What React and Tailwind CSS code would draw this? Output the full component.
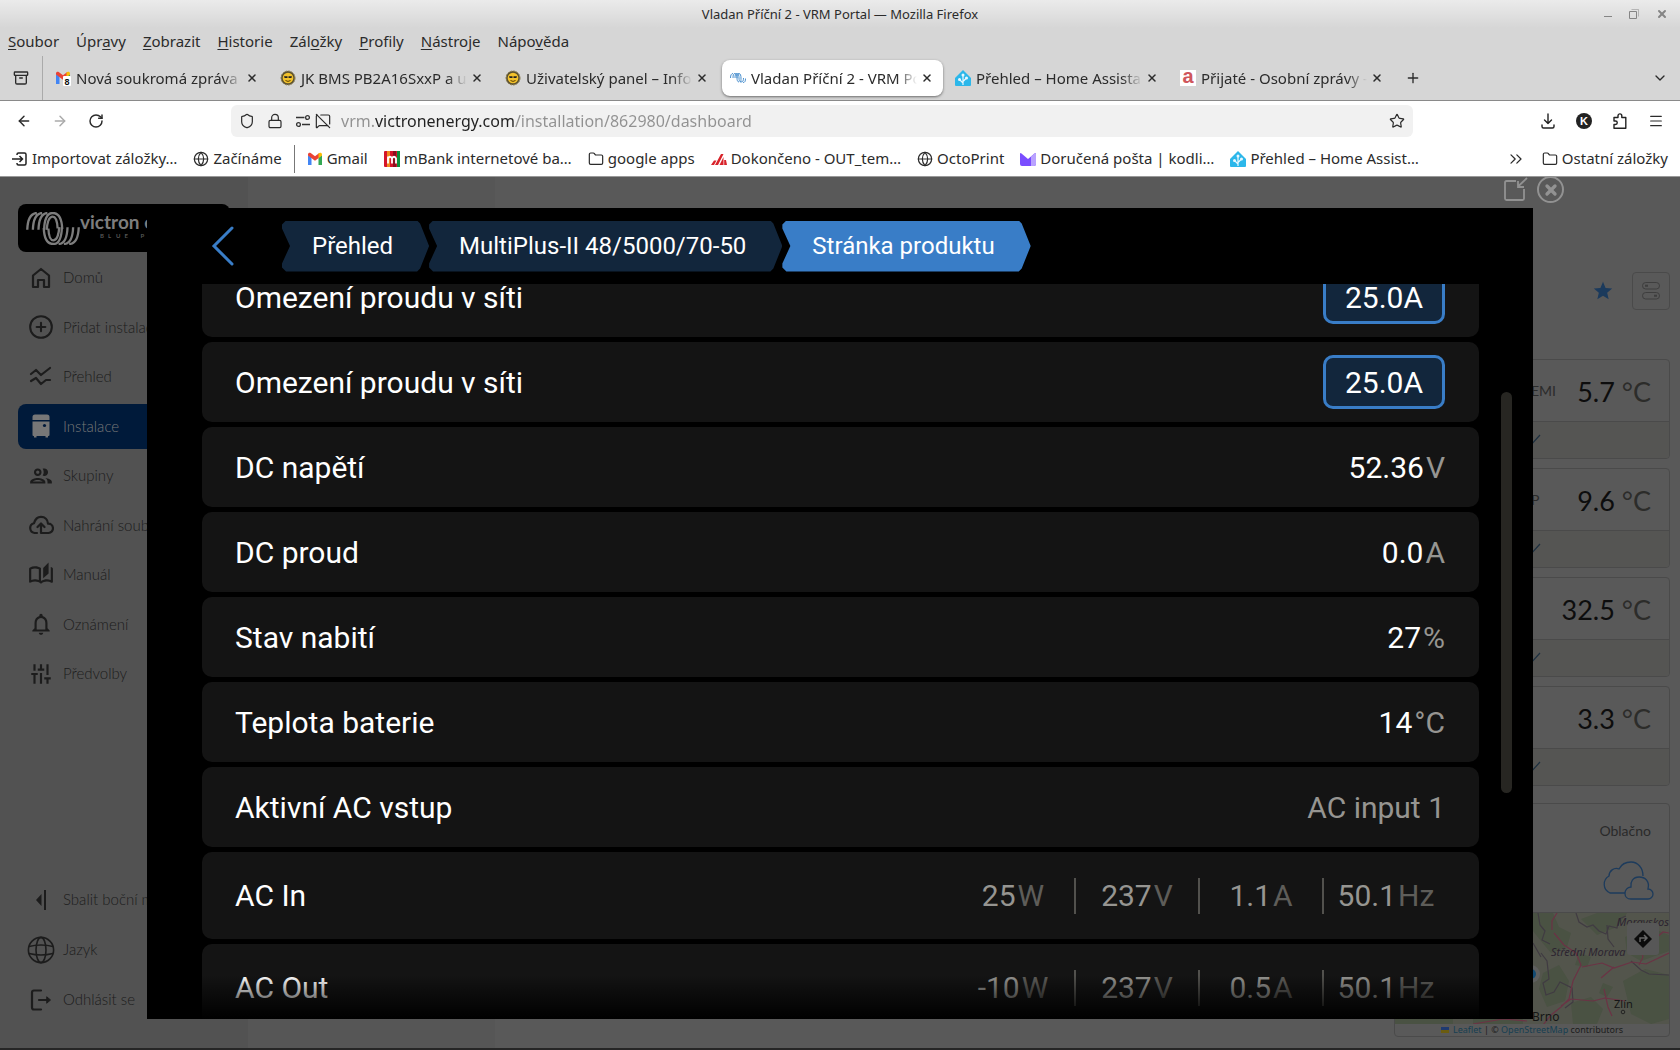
import React from "react";
import {
  Archive,
  ArrowLeft,
  ArrowRight,
  ChevronDown,
  ChevronsRight,
  CirclePlus,
  Folder,
  Globe,
  Lock,
  Menu,
  MessageSquareOff,
  Plus,
  RotateCw,
  Shield,
  Star,
  X,
} from "lucide-react";
import { MdOutlineGroup, MdOutlineAutoStories, MdNotificationsNone, MdStar, MdTune } from "react-icons/md";

/* ---------- favicons ---------- */

const GmailIcon = ({ badge }) => (
  <svg viewBox="0 0 16 16" className="size-4 shrink-0">
    <path d="M1 14V4l3.5 2.6V14z" fill="#4285f4" />
    <path d="M15 14V4l-3.500 2.600V14z" fill="#34a853" />
    <path d="M1 4.500V3.200C1 1.800 2.600 1.200 3.700 2L8 5.300 12.300 2v4.600L8 9.800z" fill="#ea4335" />
    <path d="M11.500 7.200V2.600C12.800 1.200 15 1.800 15 3.500v1z" fill="#fbbc04" />
    {badge && (
      <g>
        <rect x="8" y="6" width="8" height="10" rx="1" fill="#fff" />
        <text x="9.500" y="15" fontSize="9" fontWeight="700" fontFamily="Liberation Sans, sans-serif" fill="#111">
          {badge}
        </text>
      </g>
    )}
  </svg>
);

const SunIcon = () => (
  <svg viewBox="0 0 16 16" className="size-4 shrink-0">
    <circle cx="8" cy="8" r="7" fill="#5b5130" stroke="#8a7d52" strokeDasharray="2 1" />
    <circle cx="8" cy="8" r="5.300" fill="#f3c22b" />
    <path d="M4 6.300h3.500v1.800H4.600zM8.500 6.300H12l-.600 1.800H8.500z" fill="#222" />
    <path d="M5.500 10.500q2.500 1.800 5 0" stroke="#5a3c00" fill="none" />
  </svg>
);

const WaveIcon = () => (
  <svg viewBox="0 0 16 16" className="size-4 shrink-0" fill="none" stroke="#4a90cf" strokeWidth="1">
    <path d="M.5 8C.5 5 1.500 3.500 3 3.500M3 8c0-3 .500-4.500 2-4.500S7 6 7 8s.500 4 2 4M5 8c0-3 .500-4.500 2-4.500S9 6 9 8s.500 4 2 4M7 8c0-3 .500-4.500 2-4.500S11 6 11 8s0 4-1 4M11 12c2 0 2.500-1.500 2.500-4M13 12.500c2 0 2.500-1.500 2.500-4" />
  </svg>
);

const HomeAssistantIcon = () => (
  <svg viewBox="0 0 16 16" className="size-4 shrink-0">
    <path d="M8 0 0 8v7q0 1 1 1h14q1 0 1-1V8z" fill="#2cb7ea" />
    <path d="M8 15V5M8 13 4.500 9.500M8 11.500l3.500-3.500" stroke="#e9f8ff" strokeWidth="1.200" />
    <circle cx="8" cy="5" r="1.500" fill="#e9f8ff" />
    <circle cx="4.500" cy="9.500" r="1.500" fill="#e9f8ff" />
    <circle cx="11.500" cy="8" r="1.500" fill="#e9f8ff" />
  </svg>
);

const SeznamIcon = () => (
  <span className="flex size-4 shrink-0 items-center justify-center bg-white font-['Liberation_Sans',sans-serif] text-xl leading-none font-bold text-[#cf565c]">
    <span className="pb-1">a</span>
  </span>
);

const MBankIcon = () => (
  <svg viewBox="0 0 16 16" className="size-4 shrink-0">
    <rect width="16" height="16" rx="1" fill="#d4142a" />
    <rect x="3" width="3" height="16" fill="#f08a1d" />
    <rect x="9" width="3" height="16" fill="#8c0f1f" />
    <rect x="13" width="3" height="16" fill="#0a8f3c" />
    <path d="M4 12.500V5.500M4 7.500Q6 4 8 7.500v5M8 7.500Q10 4 12 7.500v5" stroke="#fff" strokeWidth="1.800" fill="none" />
  </svg>
);

const StripesIcon = () => (
  <svg viewBox="0 0 16 16" className="size-4 shrink-0" fill="#d8232a">
    <path d="M0 14 3 9.500h2.500L3 14zM4 14 10 3h2.500L7 14zM8.500 14 12.500 6v8z" />
    <path d="M13.200 9h1.800l1 5h-2.800z" />
  </svg>
);

const MailIcon = () => (
  <svg viewBox="0 0 16 16" className="size-4 shrink-0">
    <path d="M0 3q0-1.500 1.500-.5L8 8l6.500-5.500Q16 1.500 16 3v10q0 2-2 2H2q-2 0-2-2z" fill="#7a4dff" />
    <path d="M11 5.500l3.500-3Q16 1.500 16 3v10q0 2-2 2h-3z" fill="#b9a2ff" />
  </svg>
);

const ImportIcon = () => (
  <svg viewBox="0 0 16 16" className="size-4 shrink-0" fill="none" stroke="#222" strokeWidth="1.500">
    <path d="M5 4V3.500Q5 2 6.500 2h6Q14 2 14 3.500v9q0 1.500-1.500 1.500h-6Q5 14 5 12.500V12M0 8h10M7.500 5 10.500 8l-3 3" />
  </svg>
);

const FolderIcon = () => <Folder className="size-4 shrink-0" strokeWidth={1.8} />;

const GlobeSmall = () => <Globe className="size-4 shrink-0" strokeWidth={1.8} />;

const PermissionsIcon = () => (
  <svg viewBox="0 0 16 16" className="size-4" fill="none" stroke="#333" strokeWidth="1.300">
    <path d="M1 4.500h8.500M7 11.500h8" />
    <circle cx="12.500" cy="4.500" r="1.900" />
    <circle cx="3.500" cy="11.500" r="1.900" />
  </svg>
);

const PuzzleIcon = () => (
  <svg viewBox="0 0 16 16" className="size-4" fill="none" stroke="#222" strokeWidth="1.400" strokeLinejoin="round">
    <path d="M2 15.200V11.500h1.500a1.700 1.700 0 0 0 0-3.500H2V4.500h4V2.800a1.900 1.900 0 0 1 3.800 0v1.700h4v10.700z" />
  </svg>
);

const DownloadIcon = () => (
  <svg viewBox="0 0 16 16" className="size-4" fill="none" stroke="#222" strokeWidth="1.400" strokeLinecap="round" strokeLinejoin="round">
    <path d="M8 1v9.500M4.500 7 8 10.500 11.500 7M2 12v1.500q0 1.500 1.500 1.500h9q1.500 0 1.500-1.500V12" />
  </svg>
);

/* ---------- browser ---------- */

const menus = [
  ["", "S", "oubor"],
  ["Úpr", "a", "vy"],
  ["", "Z", "obrazit"],
  ["", "H", "istorie"],
  ["Zál", "o", "žky"],
  ["", "P", "rofily"],
  ["", "N", "ástroje"],
  ["Nápo", "v", "ěda"],
];

const tabs = [
  { title: "Nová soukromá zpráva -", icon: <GmailIcon badge="8" /> },
  { title: "JK BMS PB2A16SxxP a u", icon: <SunIcon /> },
  { title: "Uživatelský panel – Info", icon: <SunIcon /> },
  { title: "Vladan Příční 2 - VRM Po", icon: <WaveIcon />, active: true },
  { title: "Přehled – Home Assista", icon: <HomeAssistantIcon /> },
  { title: "Přijaté - Osobní zprávy -", icon: <SeznamIcon /> },
];

const bookmarks = [
  { label: "Gmail", icon: <GmailIcon /> },
  { label: "mBank internetové ba…", icon: <MBankIcon /> },
  { label: "google apps", icon: <FolderIcon /> },
  { label: "Dokončeno - OUT_tem…", icon: <StripesIcon /> },
  { label: "OctoPrint", icon: <GlobeSmall /> },
  { label: "Doručená pošta | kodli…", icon: <MailIcon /> },
  { label: "Přehled – Home Assist…", icon: <HomeAssistantIcon /> },
];

const Bookmark = ({ label, icon }) => (
  <a href="#" className="flex shrink-0 items-center gap-1 whitespace-nowrap">
    {icon}
    {label}
  </a>
);

const BrowserChrome = () => (
  <header className="shrink-0 font-['Noto_Sans',sans-serif] text-[15px] text-[#2b2b2b]">
    <div className="bg-[#d6d6d6]">
      <div className="grid h-7 grid-cols-[1fr_auto_1fr] items-center bg-linear-to-b from-[#ebebeb] to-[#d6d6d6] px-3">
        <span />
        <h1 className="pt-0.5 text-[13px]">Vladan Příční 2 - VRM Portal — Mozilla Firefox</h1>
        <div className="flex items-center justify-end gap-4 text-[#858585]">
          <button aria-label="Minimalizovat" className="mt-1 h-px w-2 bg-[#858585]" />
          <button aria-label="Obnovit" className="size-3">
            <svg viewBox="0 0 12 12" fill="none" stroke="currentColor">
              <path d="M1.500 3.500h7v7h-7z" />
              <path d="M3.500 1.500h7v7" opacity=".5" />
            </svg>
          </button>
          <button aria-label="Zavřít">
            <X className="size-3" strokeWidth={4} />
          </button>
        </div>
      </div>
      <nav className="flex h-7 items-center gap-[17px] px-2 pb-0.5">
        {menus.map(([before, key, after]) => (
          <button key={before + key + after}>
            {before}
            <span className="underline underline-offset-2">{key}</span>
            {after}
          </button>
        ))}
      </nav>
      <div className="flex h-[45px] items-center border-b border-[#8a8a8a]">
        <button aria-label="Karty" className="mr-0.5 flex h-full w-[43px] items-center justify-center border-r border-[#aaa]">
          <Archive className="size-4" strokeWidth={2} />
        </button>
        {tabs.map((tab) => (
          <div
            key={tab.title}
            className={`mx-[2px] flex h-9 w-[221px] items-center gap-1 rounded-lg pr-[10px] pl-2 ${tab.active ? "bg-white shadow-sm shadow-black/40" : ""}`}
          >
            {tab.icon}
            <button className="min-w-0 flex-1 overflow-hidden pl-px text-left whitespace-nowrap [mask-image:linear-gradient(to_right,black_88%,transparent)]">
              {tab.title}
            </button>
            <button aria-label="Zavřít panel">
              <X className="size-3" strokeWidth={3} />
            </button>
          </div>
        ))}
        <button aria-label="Nový panel" className="ml-[10px]">
          <Plus className="size-4" strokeWidth={2} />
        </button>
        <button aria-label="Seznam panelů" className="mr-3 ml-auto">
          <ChevronDown className="size-4" strokeWidth={2} />
        </button>
      </div>
    </div>
    <div className="bg-white">
      <div className="flex h-10 items-center">
        <div className="flex w-[231px] items-center gap-5 pl-4">
          <button aria-label="Zpět">
            <ArrowLeft className="size-4" strokeWidth={2.2} />
          </button>
          <button aria-label="Vpřed" className="text-[#aaa]">
            <ArrowRight className="size-4" strokeWidth={2.2} />
          </button>
          <button aria-label="Obnovit stránku">
            <RotateCw className="size-4" strokeWidth={2.2} />
          </button>
        </div>
        <div className="flex h-8 flex-1 items-center rounded-md bg-[#f1f1f1] px-2">
          <Shield className="mr-3 size-4" strokeWidth={1.8} />
          <Lock className="mr-3 size-4" strokeWidth={1.8} />
          <PermissionsIcon />
          <MessageSquareOff className="mr-[10px] ml-1 size-4" strokeWidth={1.8} />
          <input
            aria-label="Adresa"
            defaultValue="vrm.victronenergy.com/installation/862980/dashboard"
            className="min-w-0 flex-1 bg-[linear-gradient(to_right,#919191_34px,#202020_34px,#202020_174px,#919191_174px)] bg-clip-text text-base text-transparent outline-none"
          />
          <button aria-label="Přidat záložku">
            <Star className="size-4" strokeWidth={1.8} />
          </button>
        </div>
        <div className="flex w-[267px] items-center justify-end gap-5 pr-4">
          <button aria-label="Stahování">
            <DownloadIcon />
          </button>
          <button className="size-4 rounded-full bg-[#222] font-['Liberation_Sans',sans-serif] text-[11px] leading-4 font-bold text-white">
            K
          </button>
          <button aria-label="Rozšíření">
            <PuzzleIcon />
          </button>
          <button aria-label="Nabídka">
            <Menu className="size-4" strokeWidth={1.8} />
          </button>
        </div>
      </div>
      <div className="flex h-9 items-center gap-4 border-b border-[#999] px-3">
        <Bookmark label="Importovat záložky…" icon={<ImportIcon />} />
        <Bookmark label="Začínáme" icon={<GlobeSmall />} />
        <span className="-mx-1 h-7 w-px bg-[#777]" />
        {bookmarks.map((b) => (
          <Bookmark key={b.label} {...b} />
        ))}
        <button aria-label="Další záložky" className="ml-auto">
          <ChevronsRight className="size-5" strokeWidth={1.5} />
        </button>
        <Bookmark label="Ostatní záložky" icon={<FolderIcon />} />
      </div>
    </div>
  </header>
);

/* ---------- sidebar ---------- */

const VictronMark = () => (
  <svg viewBox="0 0 162 100" className="h-[33px] w-[54px] shrink-0" fill="none" stroke="currentColor" strokeWidth="7">
    <g id="arcs">
      <path d="M3 54C4 22 12 4 32 3M20 54C21 22 30 4 48 3M37 54C38 22 46 4 64 3M54 54C55 22 63 3 80 3 98 3 108 22 109 52M62 54C64 28 70 14 80 14 90 14 94 28 95 50" />
    </g>
    <use href="#arcs" transform="rotate(180 81 50)" />
  </svg>
);

const HomeIcon = () => (
  <svg viewBox="0 0 20 22" className="h-[22px] w-5" fill="none" stroke="currentColor" strokeWidth="2.200" strokeLinejoin="round">
    <path d="M2 20V8.500L10 2l8 6.500V20h-5v-7H7v7z" />
  </svg>
);

const TrendIcon = () => (
  <svg viewBox="0 0 24 22" className="h-[22px] w-6" fill="none" stroke="currentColor" strokeWidth="2.200" strokeLinecap="round" strokeLinejoin="round">
    <path d="M2 8l5-4 5 5L21 2M2 15l5-3 5 6 5-4h4" />
  </svg>
);

const CabinetIcon = () => (
  <svg viewBox="0 0 18 24" className="h-6 w-[18px]">
    <path d="M.5 6V3Q.5.500 3 .5h12q2.500 0 2.500 2.500v3zM.500 7.500h17V21q0 1-1 1H16v1.500h-2.500V22h-9v1.500H2V22h-.500q-1 0-1-1z" fill="currentColor" />
    <circle cx="12.500" cy="11.500" r="1.600" fill="#001a3a" />
  </svg>
);

const CloudUploadIcon = () => (
  <svg viewBox="0 0 26 20" className="h-5 w-[26px]" fill="none" stroke="currentColor" strokeWidth="2.200" strokeLinecap="round" strokeLinejoin="round">
    <path d="M9 18H6.500A5 5 0 0 1 6 8.200C7 4.500 9.500 1.800 13 1.800c4 0 6.800 3 7 6.800a4.700 4.700 0 0 1 .5 9.400H13V9M9.500 12 13 8.500l3.500 3.500" />
  </svg>
);

const CollapseIcon = () => (
  <svg viewBox="0 0 12 22" className="h-[22px] w-3" fill="currentColor">
    <path d="M6.500 5v12L1 11zM9 1h2v20H9z" />
  </svg>
);

const GlobeIcon = () => (
  <svg viewBox="0 0 28 28" className="size-7" fill="none" stroke="currentColor" strokeWidth="1.600">
    <circle cx="14" cy="14" r="12.600" />
    <ellipse cx="14" cy="14" rx="5" ry="12.600" />
    <path d="M2 10.500Q14 7.500 26 10.500M2 17.500q12 3 24 0" />
  </svg>
);

const LogoutIcon = () => (
  <svg viewBox="0 0 22 22" className="size-[22px]" fill="none" stroke="currentColor" strokeWidth="2.200" strokeLinecap="round" strokeLinejoin="round">
    <path d="M11 1.500H4Q2 1.500 2 3.500v15q0 2 2 2h7M9 11h9" />
    <path d="M17 8l3.500 3-3.500 3z" fill="currentColor" strokeWidth="1" />
  </svg>
);

const navItems = [
  { label: "Domů", icon: <HomeIcon /> },
  { label: "Přidat instalaci", icon: <CirclePlus className="size-[26px]" strokeWidth={1.9} /> },
  { label: "Přehled", icon: <TrendIcon /> },
  { label: "Instalace", icon: <CabinetIcon />, active: true },
  { label: "Skupiny", icon: <MdOutlineGroup className="size-[26px]" /> },
  { label: "Nahrání souboru", icon: <CloudUploadIcon /> },
  { label: "Manuál", icon: <MdOutlineAutoStories className="size-[26px]" /> },
  { label: "Oznámení", icon: <MdNotificationsNone className="size-[26px]" /> },
  { label: "Předvolby", icon: <MdTune className="size-[26px] rotate-90" /> },
];

const bottomItems = [
  { label: "Sbalit boční menu", icon: <CollapseIcon /> },
  { label: "Jazyk", icon: <GlobeIcon /> },
  { label: "Odhlásit se", icon: <LogoutIcon /> },
];

const NavItem = ({ label, icon, active }) => (
  <a
    href="#"
    className={`flex h-[45px] items-center rounded-lg pl-2 text-[15px] whitespace-nowrap ${active ? "bg-[#001a3a] text-[#777]" : "text-[#1c1c1c]"}`}
  >
    <span className="mr-2 flex w-[29px] justify-center">{icon}</span>
    {label}
  </a>
);

const Sidebar = () => (
  <aside className="flex w-[248px] shrink-0 flex-col bg-[#525252] px-[18px] pt-[27px] font-['Lato',sans-serif] font-light">
    <div className="flex h-12 shrink-0 items-center rounded-lg bg-black pl-2 text-[#7d7d7d]">
      <VictronMark />
      <div className="flex flex-col pb-1 whitespace-nowrap">
        <span className="text-[19px] leading-5 font-bold">victron energy</span>
        <span className="flex gap-1 pl-5 text-[6px] leading-[8px] font-bold text-[#555]">
          {["B", "L", "U", "E", "", "P", "O", "W", "E", "R"].map((c, i) => (
            <span key={i} className="min-w-1">{c}</span>
          ))}
        </span>
      </div>
    </div>
    <nav className="mt-[3px] flex h-[441px] flex-col justify-between">
      {navItems.map((item) => (
        <NavItem key={item.label} {...item} />
      ))}
    </nav>
    <nav className="mt-auto mb-[26px] flex flex-col gap-[5px]">
      {bottomItems.map((item) => (
        <NavItem key={item.label} {...item} />
      ))}
    </nav>
  </aside>
);

/* ---------- dashboard widgets ---------- */

const sensors = [
  { label: "EMI", value: "5.7" },
  { label: "P", value: "9.6" },
  { label: "", value: "32.5" },
  { label: "", value: "3.3" },
];

const SensorCard = ({ label, value }) => (
  <section className="flex h-[100px] flex-col overflow-hidden rounded-sm border border-[#4a4a4a]">
    <div className="flex flex-1 items-center justify-between pt-1 pr-[18px] pl-[136px]">
      <span className="pb-1 text-sm text-[#2b2b2b]">{label}</span>
      <span className="text-[27px] text-[#2c2c2a]">
        <span className="text-[#0d0d0d]">{value}</span> °C
      </span>
    </div>
    <div className="flex h-[37px] items-center border-t border-[#4a4a4a] bg-[#555553] pl-[130px]">
      <svg viewBox="0 0 16 12" className="h-3 w-4" fill="none" stroke="#1d3040" strokeWidth="1.200">
        <path d="M1 6l5 5L15 1" />
      </svg>
    </div>
  </section>
);

const RegionMap = () => (
  <svg viewBox="0 0 276 111" preserveAspectRatio="xMaxYMin slice" className="block h-[111px] w-full" fill="none">
    <rect width="276" height="111" fill="#53554c" />
    <g fill="#4a5243">
      <path d="M140 0h20l6 14 12 6-4 14-16 6-10-12-8-10zM188 6l16-6h30l-10 14-20 8zM232 24l24-10 20 8v16l-28 10-14-8zM150 60l16-8 10 16-4 20-18 6-8-18zM230 68l22-12 24 6v44l-18 5-20-10zM178 90l20-6 12 12-6 15h-24z" />
      <path d="M186 40l12 4-4 10-12-2zM210 70l10 4-6 10-8-4zM0 98h60v13H0zM80 96h50v15H80z" />
    </g>
    <g stroke="#403b42" strokeWidth="1.200">
      <path d="M145 0l2 12 5 6-3 9 8 4M183 0l3 9 8 5 6-2 6 6 7 3 3-8 8 2 2-9 7-3M148 40l6 8 2 18-6 4 3 12 8-3 6-10 12 6 1 14-8 6M214 12l1 14 6 8M238 48l10 9 8 4 20 1M140 30l8 14" />
    </g>
    <g stroke="#6b3345" strokeWidth="1.200">
      <path d="M161 20l10 12 12 8 5 12-8 16-4 18-8 8-10 8-8 10h-30M189 54l20-4 12 5 18-6 14 2 23-11M221 54l-13 11M168 93l10-7 22 2 12-3 20 3M211 76l4 18 4 9M159 17V8l5-8M262 26l8-7 6 1M242 20l8 24-4 8M80 111l30-5 24 2" />
    </g>
    <g fontFamily="Noto Sans, sans-serif">
      <text x="224" y="13" fontSize="11" fontStyle="italic" fill="#2c2430">Moravskos</text>
      <text x="158" y="43" fontSize="11" fontStyle="italic" fill="#2c2430">Střední Morava</text>
      <text x="139" y="108" fontSize="12" fill="#151515">Brno</text>
      <text x="221" y="95" fontSize="11" fill="#151515">Zlín</text>
    </g>
    <circle cx="230" cy="99" r="1.800" stroke="#222" />
    <circle cx="138" cy="61" r="9" fill="#5f5f5f" />
    <circle cx="138" cy="61" r="5" fill="#134a72" />
    <rect x="234" y="10" width="32" height="32" rx="3" fill="#575757" />
    <path d="M250 17l9 9-9 9-9-9z" fill="#0b0b0b" />
    <path d="M247 29v-4h6M251 22l3 3-3 3" stroke="#666" strokeWidth="1.500" />
  </svg>
);

const WeatherCard = () => (
  <section className="mt-2 flex flex-1 flex-col overflow-hidden rounded-sm border border-[#4a4a4a]">
    <div className="flex flex-1 flex-col items-end border-b border-[#4a4a4a] pr-[14px]">
      <p className="mt-[17px] mr-1 text-sm text-[#2a2a2a]">Oblačno</p>
      <svg viewBox="0 0 56 40" className="mt-5 h-10 w-14" fill="none" stroke="#1d3b5c" strokeWidth="1.300">
        <path d="M26 32H11A9.500 9.500 0 0 1 10 15C10 10 15 6 20 8 23 2 28 1 32 1c7 0 12 6 12 14" />
        <path d="M32 38h17a5 5 0 0 0 0-10C51 20 46 16 40 16s-9 5-8 10c-8 1-8 12 0 12z" />
      </svg>
    </div>
    <RegionMap />
    <p className="flex h-3 items-center justify-center gap-1 font-['Noto_Sans',sans-serif] text-[9px] text-[#1c1c1c]">
      <span className="h-1.5 w-2 bg-linear-to-b from-[#1f3a70] from-50% to-[#6b5c10] to-50%" />
      <span>
        <a href="#" className="text-[#173f52]">Leaflet</a> | © <a href="#" className="text-[#173f52]">OpenStreetMap</a> contributors
      </span>
    </p>
  </section>
);

const Dashboard = () => (
  <main className="flex min-w-0 flex-1 font-['Lato',sans-serif]">
    <div className="w-[247px] shrink-0 bg-[#565656]" />
    <div className="flex flex-1 justify-end bg-[#595959] pr-[10px] pb-[11px]">
      <div className="flex w-[276px] flex-col gap-[9px] pt-[95px]">
        <div className="mb-10 flex h-[38px] shrink-0 items-center justify-end gap-[18px]">
          <button aria-label="Oblíbené">
            <MdStar className="size-[22px] text-[#1b3a5c]" />
          </button>
          <button aria-label="Přepínače" className="flex size-[38px] items-center justify-center rounded-sm border border-[#4a4a4a]">
            <svg viewBox="0 0 18 18" className="size-[18px]" fill="none" stroke="#3e3e3e">
              <rect x=".5" y=".5" width="17" height="6.500" rx="3.200" />
              <rect x=".5" y="10.500" width="17" height="6.500" rx="3.200" />
              <path d="M3 3.800h3M12 13.800h3" strokeWidth="2" />
            </svg>
          </button>
        </div>
        {sensors.map((s) => (
          <SensorCard key={s.value} {...s} />
        ))}
        <WeatherCard />
      </div>
    </div>
  </main>
);

/* ---------- remote console dialog ---------- */

const Crumb = ({ children, active }) => (
  <button
    className={`h-[51px] pr-9 pl-[30px] text-2xl whitespace-nowrap [clip-path:polygon(4px_0,calc(100%-12px)_0,calc(100%-9px)_3px,100%_50%,calc(100%-9px)_calc(100%-3px),calc(100%-12px)_100%,4px_100%,0_calc(100%-4px),0_calc(100%-8px),8px_50%,0_8px,0_4px)] ${active ? "bg-[#397dc7]" : "bg-[#12263c]"}`}
  >
    {children}
  </button>
);

const rows = [
  { label: "Omezení proudu v síti", limit: "25.0A" },
  { label: "Omezení proudu v síti", limit: "25.0A" },
  { label: "DC napětí", value: "52.36", unit: "V" },
  { label: "DC proud", value: "0.0", unit: "A" },
  { label: "Stav nabití", value: "27", unit: "%" },
  { label: "Teplota baterie", value: "14", unit: "°C" },
  { label: "Aktivní AC vstup", text: "AC input 1" },
];

const acRows = [
  { label: "AC In", values: [["25", "W"], ["237", "V"], ["1.1", "A"], ["50.1", "Hz"]] },
  { label: "AC Out", values: [["-10", "W"], ["237", "V"], ["0.5", "A"], ["50.1", "Hz"]] },
];

const Row = ({ label, limit, value, unit, text }) => (
  <li className="flex h-20 shrink-0 items-center justify-between rounded-[10px] bg-[#141414] pr-[34px] pl-[33px]">
    <span>{label}</span>
    {limit && (
      <button className="h-[54px] w-[122px] rounded-[10px] border-3 border-[#397dc7] bg-[#12263c]">{limit}</button>
    )}
    {value && (
      <span>
        {value}
        <span className="ml-0.5 text-[#969591]">{unit}</span>
      </span>
    )}
    {text && <span className="text-[#969591]">{text}</span>}
  </li>
);

const AcRow = ({ label, values }) => (
  <li className="flex h-[87px] shrink-0 items-center justify-between rounded-[10px] bg-[#141414] pr-[31px] pl-[33px]">
    <span>{label}</span>
    <div className="flex divide-x-2 divide-[#52514d]">
      {values.map(([value, unit]) => (
        <span key={unit} className="w-[124px] text-center leading-9 text-[#969591]">
          {value}
          <span className="ml-0.5 text-[#5e5d59]">{unit}</span>
        </span>
      ))}
    </div>
  </li>
);

const ConsoleDialog = () => (
  <div role="dialog" aria-label="Stránka produktu" className="absolute inset-x-[147px] top-[31px] bottom-[29px] flex flex-col bg-black font-['Roboto',sans-serif] text-white">
    <header className="flex h-[76px] shrink-0 items-center pl-[64px]">
      <button aria-label="Zpět" className="mr-[47px]">
        <svg viewBox="0 0 24 40" className="h-10 w-6" fill="none" stroke="#397dc7" strokeWidth="3" strokeLinecap="round">
          <path d="M21 2 3 20l18 18" />
        </svg>
      </button>
      <Crumb>Přehled</Crumb>
      <Crumb>MultiPlus-II 48/5000/70-50</Crumb>
      <Crumb active>Stránka produktu</Crumb>
    </header>
    <div className="flex min-h-0 flex-1">
      <div className="relative min-w-0 flex-1 overflow-hidden pl-[55px]">
        <ul className="-mt-[27px] flex flex-col gap-[5px] text-[30px]">
          {rows.map((row, i) => (
            <Row key={i} {...row} />
          ))}
          {acRows.map((row) => (
            <AcRow key={row.label} {...row} />
          ))}
        </ul>
        <div className="absolute inset-x-0 bottom-0 h-11 bg-linear-to-b from-transparent to-black" />
      </div>
      <div className="w-[54px] shrink-0 pt-[108px] pl-[22px]">
        <div className="h-[401px] w-[11px] rounded-full bg-[#272622]" />
      </div>
    </div>
    <div className="absolute right-[-31px] bottom-full flex items-center gap-[9px] pb-[5px] text-[#929292]">
      <button aria-label="Otevřít v okně">
        <svg viewBox="0 0 26 26" className="size-[26px]" fill="none" stroke="currentColor" strokeWidth="1.800">
          <path d="M14 4H4.500Q3 4 3 5.500v16Q3 23 4.500 23h16q1.500 0 1.500-1.500V12M25 1l-9 8.500M16 4v6h6" />
        </svg>
      </button>
      <button aria-label="Zavřít" className="flex size-[27px] items-center justify-center rounded-full border-2">
        <X className="size-4" strokeWidth={5} />
      </button>
    </div>
  </div>
);

const App = () => {
  return (
    <div className="flex h-screen flex-col overflow-hidden">
      <BrowserChrome />
      <div className="relative flex min-h-0 flex-1 border-b-2 border-[#262626]">
        <Sidebar />
        <Dashboard />
        <ConsoleDialog />
      </div>
    </div>
  );
};

export default App;
